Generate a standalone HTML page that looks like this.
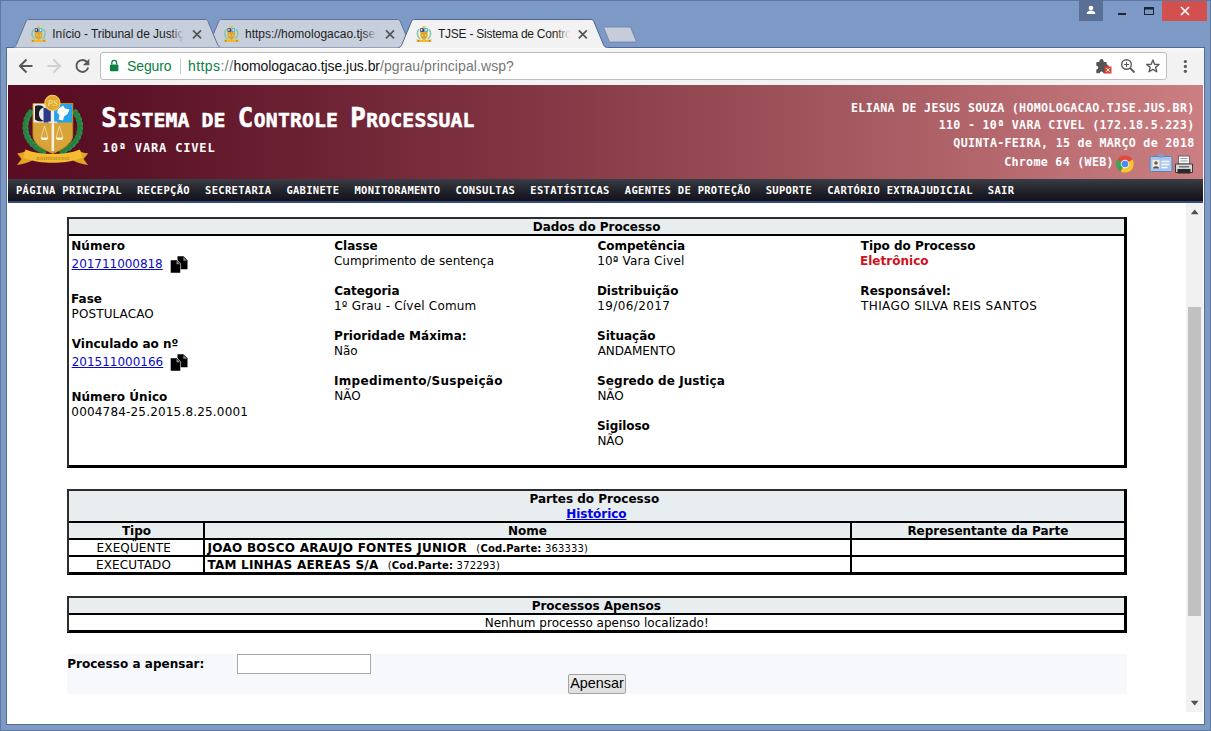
<!DOCTYPE html>
<html lang="pt-BR">
<head>
<meta charset="utf-8">
<title>TJSE - Sistema de Controle Processual</title>
<style>
html,body{margin:0;padding:0;}
body{width:1211px;height:731px;overflow:hidden;background:#7d99c5;position:relative;font-family:"Liberation Sans",sans-serif;}
.abs{position:absolute;}
#frame{position:absolute;left:0;top:0;width:1211px;height:731px;background:#7d99c5;}
/* ---------- chrome ui ---------- */
#toolbar{position:absolute;left:7px;top:48px;width:1197px;height:37px;background:linear-gradient(#fafafa 0,#f2f2f2 4px);}
#omni{position:absolute;left:100px;top:52px;width:1065px;height:26px;background:#fff;border:1px solid #bdbdbd;border-radius:3px;}
.tabtxt{position:absolute;top:26px;height:17px;font-size:12px;line-height:17px;color:#1e1e1e;white-space:nowrap;overflow:hidden;}
.url{position:absolute;top:55px;font-size:14px;line-height:22px;white-space:nowrap;}
/* ---------- page ---------- */
#page{position:absolute;left:8px;top:85px;width:1195px;height:639px;background:#fff;overflow:hidden;}
#hdr{position:absolute;left:0;top:0;width:1195px;height:94px;background:linear-gradient(90deg,#5a0c22 0%,#590f24 7%,#6b2032 24%,#7f3341 41%,#9e525a 66%,#cb7f82 100%);}
#menu{position:absolute;left:0;top:94px;width:1195px;height:22px;background:linear-gradient(180deg,#3b3d46 0%,#25262e 45%,#11121b 100%);border-bottom:2px solid #36497c;}
.mono{font-family:"DejaVu Sans Mono","Liberation Mono",monospace;font-weight:bold;color:#fff;white-space:nowrap;position:absolute;}
.v{font-family:"DejaVu Sans","Liberation Sans",sans-serif;font-size:12px;line-height:15px;color:#000;white-space:nowrap;position:absolute;}
.b{font-weight:bold;}
a{color:#0000ee;}

.tb{font-size:25.8px;letter-spacing:0.57px;-webkit-text-stroke:0.55px #fff;}
.ts{font-size:19.75px;letter-spacing:0.15px;-webkit-text-stroke:0.5px #fff;}
.rt{right:8.5px;font-size:11.67px;letter-spacing:0.29px;line-height:16px;text-align:right;}
#mn span{display:inline-block;margin-right:14.13px;}

.red{color:#d01018;}
.sm{font-size:10px;}
.v a{color:#0a0ac4;text-decoration:underline;}
.v.b a{color:#0000e6;}
</style>
</head>
<body>
<div id="frame"></div>
<div class="abs" style="left:0;top:0;width:1209px;height:729px;border:1px solid #5f789f;"></div>
<div class="abs" style="left:6px;top:47px;width:1197px;height:677px;border:1px solid #566c94;border-top:none;"></div>

<svg class="abs" style="left:0;top:0" width="1211" height="52" viewBox="0 0 1211 52">
<rect x="6" y="47" width="1199" height="1" fill="#4d6693"/>
<path d="M205.0,47.5 C207.0,47.5 208.3,46.5 209.1,44.5 L218.6,21.7 C219.1,20.4 219.9,19.5 221.3,19.5 L397.7,19.5 C399.1,19.5 399.9,20.4 400.4,21.7 L409.9,44.5 C410.7,46.5 412.0,47.5 414.0,47.5" fill="#c7cedc" stroke="#60739a" stroke-width="1"/>
<path d="M12.3,47.5 C14.3,47.5 15.600000000000001,46.5 16.400000000000002,44.5 L25.900000000000002,21.7 C26.400000000000002,20.4 27.2,19.5 28.6,19.5 L205.39999999999998,19.5 C206.79999999999998,19.5 207.6,20.4 208.1,21.7 L217.6,44.5 C218.39999999999998,46.5 219.7,47.5 221.7,47.5" fill="#c7cedc" stroke="#60739a" stroke-width="1"/>
<rect x="17" y="47" width="384" height="1" fill="#98a2b8"/>
<path d="M604.600 27L629.500 27Q630.400 27 630.800 27.900L636.300 41Q636.700 42 635.600 42L610.500 42Q609.600 42 609.200 41.100L603.800 28Q603.500 27 604.600 27z" fill="#c6ccda" stroke="#6a80a8" stroke-width="0.800"/>
<rect x="7" y="48" width="1197" height="4" fill="#f6f6f6"/>
<path d="M397.8,47.5 C399.8,47.5 401.1,46.5 401.90000000000003,44.5 L411.40000000000003,21.7 C411.90000000000003,20.4 412.7,19.5 414.1,19.5 L591.2,19.5 C592.6,19.5 593.4,20.4 593.9,21.7 L603.4,44.5 C604.2,46.5 605.5,47.5 607.5,47.5 L608,48.500 L397.300,48.500z" fill="#f2f2f2"/>
<path d="M397.8,47.5 C399.8,47.5 401.1,46.5 401.90000000000003,44.5 L411.40000000000003,21.7 C411.90000000000003,20.4 412.7,19.5 414.1,19.5 L591.2,19.5 C592.6,19.5 593.4,20.4 593.9,21.7 L603.4,44.5 C604.2,46.5 605.5,47.5 607.5,47.5" fill="none" stroke="#4f6590" stroke-width="1"/>
<g transform="translate(30.5,26)"><path d="M3 3.200C0.600 6 0.800 10.500 4.200 13.200M13 3.200C15.400 6 15.200 10.500 11.800 13.200" fill="none" stroke="#86c9a4" stroke-width="1.700"/><path d="M4.300 2.200h7.400v7.300c0 2.300-1.800 3.600-3.700 4.700-1.900-1.100-3.700-2.400-3.700-4.700z" fill="#dfa62f"/><path d="M4.300 2.200h3.700v3.600H4.300z" fill="#3a3f86"/><path d="M5 3h1.300v1.800H5z" fill="#eef0f8"/><path d="M8 2.200h3.700v3.600H8z" fill="#3fb4e6"/><path d="M9 3.500l1.600-.8.400 1.500-1.200 1z" fill="#d8f2fb"/><circle cx="8" cy="1.300" r="1.400" fill="#e6be3a"/><circle cx="6.300" cy="9.300" r=".7" fill="#f6dc7a"/><circle cx="9.700" cy="9.300" r=".7" fill="#f6dc7a"/><path d="M0 13.300l3.200.5h9.600l3.200-.5-1.200 1.400 1.200 1.300H0l1.200-1.300z" fill="#efbb2c"/><path d="M1.800 14.200h1.200v1.400H1.800zM13 14.200h1.200v1.400H13z" fill="#8a6a2a"/></g><g transform="translate(223.3,26)"><path d="M3 3.200C0.600 6 0.800 10.500 4.200 13.200M13 3.200C15.400 6 15.200 10.500 11.800 13.200" fill="none" stroke="#86c9a4" stroke-width="1.700"/><path d="M4.300 2.200h7.400v7.300c0 2.300-1.800 3.600-3.700 4.700-1.900-1.100-3.700-2.400-3.700-4.700z" fill="#dfa62f"/><path d="M4.300 2.200h3.700v3.600H4.300z" fill="#3a3f86"/><path d="M5 3h1.300v1.800H5z" fill="#eef0f8"/><path d="M8 2.200h3.700v3.600H8z" fill="#3fb4e6"/><path d="M9 3.500l1.600-.8.400 1.500-1.200 1z" fill="#d8f2fb"/><circle cx="8" cy="1.300" r="1.400" fill="#e6be3a"/><circle cx="6.300" cy="9.300" r=".7" fill="#f6dc7a"/><circle cx="9.700" cy="9.300" r=".7" fill="#f6dc7a"/><path d="M0 13.300l3.200.5h9.600l3.200-.5-1.200 1.400 1.200 1.300H0l1.200-1.300z" fill="#efbb2c"/><path d="M1.800 14.200h1.200v1.400H1.800zM13 14.200h1.200v1.400H13z" fill="#8a6a2a"/></g><g transform="translate(416,26)"><path d="M3 3.200C0.600 6 0.800 10.500 4.200 13.200M13 3.200C15.400 6 15.200 10.500 11.800 13.200" fill="none" stroke="#86c9a4" stroke-width="1.700"/><path d="M4.300 2.200h7.400v7.300c0 2.300-1.800 3.600-3.700 4.700-1.900-1.100-3.700-2.400-3.700-4.700z" fill="#dfa62f"/><path d="M4.300 2.200h3.700v3.600H4.300z" fill="#3a3f86"/><path d="M5 3h1.300v1.800H5z" fill="#eef0f8"/><path d="M8 2.200h3.700v3.600H8z" fill="#3fb4e6"/><path d="M9 3.500l1.600-.8.400 1.500-1.200 1z" fill="#d8f2fb"/><circle cx="8" cy="1.300" r="1.400" fill="#e6be3a"/><circle cx="6.300" cy="9.300" r=".7" fill="#f6dc7a"/><circle cx="9.700" cy="9.300" r=".7" fill="#f6dc7a"/><path d="M0 13.300l3.200.5h9.600l3.200-.5-1.200 1.400 1.200 1.300H0l1.200-1.300z" fill="#efbb2c"/><path d="M1.800 14.200h1.200v1.400H1.800zM13 14.200h1.200v1.400H13z" fill="#8a6a2a"/></g>
<g stroke="#555" stroke-width="1.700" fill="none"><path d="M193 30.300l8 8M201 30.300l-8 8"/><path d="M386 30.300l8 8M394 30.300l-8 8"/><path d="M578.800 30.300l8 8M586.800 30.300l-8 8"/></g>
<rect x="1079" y="0" width="24" height="21" fill="#5a6f96"/>
<circle cx="1091" cy="8" r="2.300" fill="#fff"/><path d="M1086.800 14v-.8c0-1.700 2.500-2.600 4.200-2.600s4.200.9 4.200 2.600v.8z" fill="#fff"/>
<rect x="1118" y="13" width="8" height="2" fill="#1c2438"/>
<rect x="1144.500" y="7.500" width="9" height="7" fill="none" stroke="#1c2438" stroke-width="1"/><rect x="1144" y="7" width="10" height="2.500" fill="#1c2438"/>
<rect x="1162" y="1" width="45" height="20" fill="#d4504f"/>
<path d="M1181 7l8 8M1189 7l-8 8" stroke="#fff" stroke-width="1.700"/>
</svg>
<div class="tabtxt" id="tt1" style="left:52.3px;width:132px;letter-spacing:-0.06px;">Início - Tribunal de Justiça</div>
<div class="tabtxt" id="tt2" style="left:245px;width:132px;">https://homologacao.tjse.jus.br</div>
<div class="tabtxt" id="tt3" style="left:438px;width:132px;letter-spacing:-0.25px;">TJSE - Sistema de Controle Processual</div>

<div class="abs" style="left:170px;top:24px;width:15px;height:20px;background:linear-gradient(90deg,rgba(198,206,221,0),rgba(198,206,221,1) 92%);"></div>
<div class="abs" style="left:363px;top:24px;width:15px;height:20px;background:linear-gradient(90deg,rgba(198,206,221,0),rgba(198,206,221,1) 92%);"></div>
<div class="abs" style="left:556px;top:24px;width:15px;height:20px;background:linear-gradient(90deg,rgba(242,242,242,0),rgba(242,242,242,1) 92%);"></div>
<!--TABS-->
<div id="toolbar"></div>
<div id="omni"></div>

<svg class="abs" style="left:0;top:48px" width="1211" height="37" viewBox="0 48 1211 37">
<g stroke="#5a5a5a" stroke-width="2" fill="none"><path d="M32.500 66H20.500M26.500 59.500L20 66l6.500 6.500"/></g>
<g stroke="#cfcfcf" stroke-width="2" fill="none"><path d="M47.500 66H59.500M53.500 59.500L60 66l-6.500 6.500"/></g>
<g stroke="#5a5a5a" stroke-width="2" fill="none"><path d="M87 62a6 6 0 1 0 1.200 5.500"/></g><path d="M89.300 58.800v6.400h-6.400z" fill="#5a5a5a"/>
<rect x="110" y="64.500" width="8.400" height="6.700" rx="1" fill="#0b8043"/><path d="M111.800 64.500v-1.700a2.400 2.400 0 0 1 4.800 0v1.700" fill="none" stroke="#0b8043" stroke-width="1.300"/>
<rect x="180" y="58.500" width="1" height="15" fill="#c9c9c9"/>
<g fill="#5a5a5a"><circle cx="1185.400" cy="61.500" r="1.600"/><circle cx="1185.400" cy="66.400" r="1.600"/><circle cx="1185.400" cy="71.300" r="1.600"/></g>
<path d="M1152.90 60.00L1154.58 64.19L1159.08 64.49L1155.61 67.38L1156.72 71.76L1152.90 69.35L1149.08 71.76L1150.19 67.38L1146.72 64.49L1151.22 64.19z" fill="none" stroke="#5a5a5a" stroke-width="1.400" stroke-linejoin="round"/>
<g fill="none" stroke="#5a5a5a" stroke-width="1.400"><circle cx="1126.500" cy="64.500" r="4.800"/><path d="M1130 68l4.500 4.500" stroke-width="1.800"/><path d="M1124 64.500h5M1126.500 62v5" stroke-width="1"/></g>
<g fill="#555"><rect x="1096.300" y="62" width="10.400" height="11.200" rx=".8"/><circle cx="1101.500" cy="61.200" r="2.100"/><circle cx="1106.700" cy="66.500" r="2"/></g><g fill="#fff"><circle cx="1096.300" cy="67.600" r="1.900"/><circle cx="1101.500" cy="73.400" r="1.900"/></g>
<rect x="1104.500" y="66.500" width="7" height="7" fill="#db4437"/><path d="M1106.300 68.300l3.400 3.400M1109.700 68.300l-3.400 3.400" stroke="#fff" stroke-width="1"/>
</svg>
<div class="url" id="seg" style="left:127px;color:#0b8043;letter-spacing:-0.1px;">Seguro</div>
<div class="url" id="urlt" style="left:188px;"><span style="color:#0b8043;letter-spacing:0.43px">https</span><span style="color:#777;letter-spacing:0.43px">://</span><span style="color:#111;letter-spacing:-0.06px">homologacao.tjse.jus.br</span><span style="color:#777;letter-spacing:0.08px">/pgrau/principal.wsp?</span></div>
<!--TOOLBARITEMS-->
<div class="abs" style="left:7px;top:85px;width:1197px;height:639px;background:#fff;"></div>
<div id="page">
  <div id="hdr"></div>
  <div id="menu"></div>

<div class="mono" id="title" style="left:93.2px;top:18px;line-height:30px;"><span class="tb">S</span><span class="ts">ISTEMA DE </span><span class="tb">C</span><span class="ts">ONTROLE </span><span class="tb">P</span><span class="ts">ROCESSUAL</span></div>
<div class="mono" id="sub" style="left:94.6px;top:55px;font-size:12.1px;letter-spacing:0.78px;line-height:16px;">10ª VARA CIVEL</div>
<div class="mono rt" style="top:15px;">ELIANA DE JESUS SOUZA (HOMOLOGACAO.TJSE.JUS.BR)</div>
<div class="mono rt" style="top:32px;">110 - 10ª VARA CIVEL (172.18.5.223)</div>
<div class="mono rt" style="top:50px;">QUINTA-FEIRA, 15 de MARÇO de 2018</div>
<div class="mono rt" style="top:69px;right:89.2px;">Chrome 64 (WEB)</div>
<div class="mono" id="mn" style="left:7.9px;top:98.8px;font-size:9.8px;letter-spacing:0.287px;line-height:14px;transform:scaleX(1.07);transform-origin:0 0;"><span>PÁGINA PRINCIPAL</span><span>RECEPÇÃO</span><span>SECRETARIA</span><span>GABINETE</span><span>MONITORAMENTO</span><span>CONSULTAS</span><span>ESTATÍSTICAS</span><span>AGENTES DE PROTEÇÃO</span><span>SUPORTE</span><span>CARTÓRIO EXTRAJUDICIAL</span><span>SAIR</span></div>

<svg class="abs" id="logo" style="left:2px;top:3px" width="90" height="84" viewBox="0 0 90 84">
<ellipse cx="19.7" cy="25.5" rx="4.3" ry="2.3" transform="rotate(-28 19.7 25.5)" fill="#2f9350"/><ellipse cx="19.7" cy="25.5" rx="4.300" ry="2.200" transform="rotate(-84 19.7 25.5)" fill="#27803f"/><ellipse cx="17.5" cy="29.4" rx="4.3" ry="2.3" transform="rotate(-38 17.5 29.4)" fill="#2f9350"/><ellipse cx="17.5" cy="29.4" rx="4.300" ry="2.200" transform="rotate(-94 17.5 29.4)" fill="#27803f"/><ellipse cx="16.1" cy="33.7" rx="4.3" ry="2.3" transform="rotate(-49 16.1 33.7)" fill="#2f9350"/><ellipse cx="16.1" cy="33.7" rx="4.300" ry="2.200" transform="rotate(-105 16.1 33.7)" fill="#27803f"/><ellipse cx="15.5" cy="38.1" rx="4.3" ry="2.3" transform="rotate(-60 15.5 38.1)" fill="#2f9350"/><ellipse cx="15.5" cy="38.1" rx="4.300" ry="2.200" transform="rotate(-116 15.5 38.1)" fill="#27803f"/><ellipse cx="15.8" cy="42.5" rx="4.3" ry="2.3" transform="rotate(-71 15.8 42.5)" fill="#2f9350"/><ellipse cx="15.8" cy="42.5" rx="4.300" ry="2.200" transform="rotate(-127 15.8 42.5)" fill="#27803f"/><ellipse cx="16.8" cy="46.9" rx="4.3" ry="2.3" transform="rotate(-81 16.8 46.9)" fill="#2f9350"/><ellipse cx="16.8" cy="46.9" rx="4.300" ry="2.200" transform="rotate(-137 16.8 46.9)" fill="#27803f"/><ellipse cx="18.7" cy="51.0" rx="4.3" ry="2.3" transform="rotate(-92 18.7 51.0)" fill="#2f9350"/><ellipse cx="18.7" cy="51.0" rx="4.300" ry="2.200" transform="rotate(-148 18.7 51.0)" fill="#27803f"/><ellipse cx="21.3" cy="54.7" rx="4.3" ry="2.3" transform="rotate(-102 21.3 54.7)" fill="#2f9350"/><ellipse cx="21.3" cy="54.7" rx="4.300" ry="2.200" transform="rotate(-158 21.3 54.7)" fill="#27803f"/><ellipse cx="24.6" cy="58.0" rx="4.3" ry="2.3" transform="rotate(-112 24.6 58.0)" fill="#2f9350"/><ellipse cx="24.6" cy="58.0" rx="4.300" ry="2.200" transform="rotate(-168 24.6 58.0)" fill="#27803f"/><ellipse cx="28.4" cy="60.6" rx="4.3" ry="2.3" transform="rotate(-122 28.4 60.6)" fill="#2f9350"/><ellipse cx="28.4" cy="60.6" rx="4.300" ry="2.200" transform="rotate(-178 28.4 60.6)" fill="#27803f"/><ellipse cx="32.7" cy="62.6" rx="4.3" ry="2.3" transform="rotate(-131 32.7 62.6)" fill="#2f9350"/><ellipse cx="32.7" cy="62.6" rx="4.300" ry="2.200" transform="rotate(-187 32.7 62.6)" fill="#27803f"/><ellipse cx="65.9" cy="25.5" rx="4.300" ry="2.300" transform="rotate(84 65.9 25.5)" fill="#2f9350"/><ellipse cx="65.9" cy="25.5" rx="4.300" ry="2.200" transform="rotate(28 65.9 25.5)" fill="#27803f"/><ellipse cx="68.1" cy="29.4" rx="4.300" ry="2.300" transform="rotate(94 68.1 29.4)" fill="#2f9350"/><ellipse cx="68.1" cy="29.4" rx="4.300" ry="2.200" transform="rotate(38 68.1 29.4)" fill="#27803f"/><ellipse cx="69.5" cy="33.7" rx="4.300" ry="2.300" transform="rotate(105 69.5 33.7)" fill="#2f9350"/><ellipse cx="69.5" cy="33.7" rx="4.300" ry="2.200" transform="rotate(49 69.5 33.7)" fill="#27803f"/><ellipse cx="70.1" cy="38.1" rx="4.300" ry="2.300" transform="rotate(116 70.1 38.1)" fill="#2f9350"/><ellipse cx="70.1" cy="38.1" rx="4.300" ry="2.200" transform="rotate(60 70.1 38.1)" fill="#27803f"/><ellipse cx="69.8" cy="42.5" rx="4.300" ry="2.300" transform="rotate(127 69.8 42.5)" fill="#2f9350"/><ellipse cx="69.8" cy="42.5" rx="4.300" ry="2.200" transform="rotate(71 69.8 42.5)" fill="#27803f"/><ellipse cx="68.8" cy="46.9" rx="4.300" ry="2.300" transform="rotate(137 68.8 46.9)" fill="#2f9350"/><ellipse cx="68.8" cy="46.9" rx="4.300" ry="2.200" transform="rotate(81 68.8 46.9)" fill="#27803f"/><ellipse cx="66.9" cy="51.0" rx="4.300" ry="2.300" transform="rotate(148 66.9 51.0)" fill="#2f9350"/><ellipse cx="66.9" cy="51.0" rx="4.300" ry="2.200" transform="rotate(92 66.9 51.0)" fill="#27803f"/><ellipse cx="64.3" cy="54.7" rx="4.300" ry="2.300" transform="rotate(158 64.3 54.7)" fill="#2f9350"/><ellipse cx="64.3" cy="54.7" rx="4.300" ry="2.200" transform="rotate(102 64.3 54.7)" fill="#27803f"/><ellipse cx="61.0" cy="58.0" rx="4.300" ry="2.300" transform="rotate(168 61.0 58.0)" fill="#2f9350"/><ellipse cx="61.0" cy="58.0" rx="4.300" ry="2.200" transform="rotate(112 61.0 58.0)" fill="#27803f"/><ellipse cx="57.2" cy="60.6" rx="4.300" ry="2.300" transform="rotate(178 57.2 60.6)" fill="#2f9350"/><ellipse cx="57.2" cy="60.6" rx="4.300" ry="2.200" transform="rotate(122 57.2 60.6)" fill="#27803f"/><ellipse cx="52.9" cy="62.6" rx="4.300" ry="2.300" transform="rotate(187 52.9 62.6)" fill="#2f9350"/><ellipse cx="52.9" cy="62.6" rx="4.300" ry="2.200" transform="rotate(131 52.9 62.6)" fill="#27803f"/>
<path d="M23 15.500H62.700V47C62.700 56 52 61.500 42.800 65.500C33.500 61.500 23 56 23 47z" fill="#d9a437"/>
<path d="M23 15.500H42.800V34.500H23z" fill="#e9ecf2"/>
<path d="M42.800 15.500H62.700V34.500H42.800z" fill="#25a3e6"/>
<path d="M25 18c3-1.500 7-1 9 1.500-3 .5-5 3-5 6.500s2 6 5 7c-3 1-7 .5-9-1.500z" fill="#1c1c22"/>
<path d="M33.500 20h7.300v14.500h-7.300z" fill="#2c3a8c"/>
<path d="M48 21l5-3.500 2 3 4.500 1-2 4.500-3.500 2.500-1 4-4.500-1 1-4.500-2.500-2.500z" fill="#fdfdfd"/>
<path d="M23 15.500H62.700V47C62.700 56 52 61.500 42.800 65.500C33.500 61.500 23 56 23 47z" fill="none" stroke="#c48a22" stroke-width="1"/>
<rect x="41.600" y="22" width="2.500" height="41" fill="#f6f2ea"/>
<rect x="38.500" y="33.500" width="8.700" height="1.500" fill="#e8e2d4"/>
<path d="M34.500 38l-3.300 11.500M34.500 38l3.300 11.500M49.500 38l-3.300 11.500M49.500 38l3.300 11.500" stroke="#f2e6c4" stroke-width=".7" fill="none"/>
<path d="M30.800 49.500h7.400a3.700 2.600 0 0 1-7.400 0zM45.800 49.500h7.400a3.700 2.600 0 0 1-7.400 0z" fill="#fbf6e8"/>
<circle cx="42.400" cy="15" r="7.600" fill="#e3a92f" stroke="#f4c957" stroke-width="1.200"/>
<text x="42.400" y="18.200" font-family="Liberation Serif,serif" font-size="9" fill="#f8e3a0" text-anchor="middle" font-style="italic">PS</text>
<path d="M7.200 65.500C11 65 14 64 17 62.500L22 72.500C18 74.500 13 76.500 7 77L11.500 71z" fill="#e2a422"/>
<path d="M78.200 65.500C74 65 71 64 68 62.500L63 72.500C67 74.500 72 76.500 78 77L73.500 71z" fill="#e2a422"/>
<path d="M15.500 61.500C24 65 33 66 42.700 66C52 66 61.500 65 70 61.500L72.500 69.500C63 73.500 52 74.800 42.700 74.800C33 74.800 22.500 73.500 13 69.500z" fill="#f4bb33"/>
<text x="42.700" y="72.300" font-family="Liberation Serif,serif" font-size="4.600" font-weight="bold" fill="#b9861e" text-anchor="middle" textLength="34">JUSTITIA ET PAX</text>
</svg>

<svg class="abs" style="left:1107px;top:68px" width="80" height="22" viewBox="1115 153 80 22">
<circle cx="1125" cy="164" r="8.800" fill="#e5473a"/>
<path d="M1125 164L1117.400 159.600A8.800 8.800 0 0 0 1120.600 171.600z" fill="#3aa757"/>
<path d="M1125 164L1120.600 171.600A8.800 8.800 0 0 0 1133.800 164z" fill="#f7c52d"/>
<path d="M1125 164L1133.800 164A8.800 8.800 0 0 0 1132.600 159.600z" fill="#f7c52d"/>
<circle cx="1125" cy="164" r="4.200" fill="#f4f4f4"/><circle cx="1125" cy="164" r="3.300" fill="#4a8af4"/>
<rect x="1150" y="156.500" width="22" height="15" rx="1.500" fill="#a9c7ea" stroke="#5b82b5" stroke-width="1"/>
<rect x="1158.500" y="153.800" width="5" height="4" rx="1" fill="#7da1cf"/>
<rect x="1152.500" y="160" width="7" height="8.500" fill="#f1ede6"/><circle cx="1156" cy="163" r="1.800" fill="#7a5a48"/><path d="M1153 168.500c0-3 6-3 6 0z" fill="#5a4a5a"/>
<path d="M1161.500 161.500h8M1161.500 164.500h8M1161.500 167.500h6" stroke="#f7f9fd" stroke-width="1.300"/>
<rect x="1178.500" y="156" width="11" height="8" fill="#f5f5f5" stroke="#555" stroke-width=".8"/>
<path d="M1180.500 158.500h7M1180.500 161h7" stroke="#888" stroke-width=".8"/>
<path d="M1175.500 164h17v8.500h-17z" fill="#d6d6d6" stroke="#3a3a3a" stroke-width="1"/>
<rect x="1177.500" y="169" width="13" height="4.500" fill="#2a2a2a"/>
<rect x="1179" y="166" width="10" height="1.500" fill="#777"/>
</svg>
<!--HEADER-->
<!--CONTENT-->
<div class="abs" style="left:59px;top:132px;width:1060px;height:251px;background:#000"></div>
<div class="abs" style="left:59px;top:132px;width:1057px;height:2px;background:#2c2e2e"></div>
<div class="abs" style="left:59px;top:132px;width:2px;height:250px;background:#2c2e2e"></div>
<div class="abs" style="left:61px;top:134px;width:1055px;height:246px;background:#fff"></div>
<div class="abs" style="left:61px;top:134px;width:1055px;height:15px;background:#e8edef"></div>
<div class="abs" style="left:61px;top:149px;width:1055px;height:2px;background:#000"></div>
<div class="abs" style="left:59px;top:404px;width:1060px;height:86px;background:#000"></div>
<div class="abs" style="left:59px;top:404px;width:1057px;height:2px;background:#2c2e2e"></div>
<div class="abs" style="left:59px;top:404px;width:2px;height:85px;background:#2c2e2e"></div>
<div class="abs" style="left:61px;top:406px;width:1055px;height:81px;background:#fff"></div>
<div class="abs" style="left:61px;top:406px;width:1055px;height:30px;background:#e8edef"></div>
<div class="abs" style="left:61px;top:438px;width:1055px;height:15px;background:#e8edef"></div>
<div class="abs" style="left:61px;top:436px;width:1055px;height:2px;background:#000"></div>
<div class="abs" style="left:61px;top:453px;width:1055px;height:2px;background:#000"></div>
<div class="abs" style="left:61px;top:470px;width:1055px;height:2px;background:#000"></div>
<div class="abs" style="left:195px;top:438px;width:2px;height:49px;background:#000"></div>
<div class="abs" style="left:842px;top:438px;width:2px;height:49px;background:#000"></div>
<div class="abs" style="left:59px;top:511px;width:1060px;height:37px;background:#000"></div>
<div class="abs" style="left:59px;top:511px;width:1057px;height:2px;background:#2c2e2e"></div>
<div class="abs" style="left:59px;top:511px;width:2px;height:36px;background:#2c2e2e"></div>
<div class="abs" style="left:61px;top:513px;width:1055px;height:32px;background:#fff"></div>
<div class="abs" style="left:61px;top:513px;width:1055px;height:15px;background:#e8edef"></div>
<div class="abs" style="left:61px;top:528px;width:1055px;height:2px;background:#000"></div>
<div class="abs" style="left:59px;top:569px;width:1060px;height:40px;background:#f7f8fc"></div>
<div class="abs" style="left:229px;top:569px;width:132px;height:18px;background:#fff;border:1px solid #a9a9a9;"></div>
<div class="abs" id="btn" style="left:560px;top:589px;width:56px;height:18px;border:1px solid #a3a3a3;border-radius:2px;background:linear-gradient(#eeeeee,#dedede);"></div>
<div class="abs" id="btxt" style="left:560px;top:588.4px;width:58px;height:20px;line-height:20px;text-align:center;font-size:14.4px;color:#000;font-family:'Liberation Sans',sans-serif;">Apensar</div>
<svg class="abs" style="left:162.0px;top:170.7px" width="18" height="18" viewBox="0 0 18 18"><path d="M7.500 0.300h6l4 4v9H7.500z" fill="#000"/><path d="M13.300 0.900v3.800h3.800z" fill="#8a8a8a"/><path d="M0.400 3.900h6.500l3.700 3.800v9.400H0.400z" fill="#000" stroke="#fff" stroke-width="0.600"/><path d="M6.500 4.600v3.700h3.700z" fill="#8a8a8a"/></svg>
<svg class="abs" style="left:162.0px;top:268.7px" width="18" height="18" viewBox="0 0 18 18"><path d="M7.500 0.300h6l4 4v9H7.500z" fill="#000"/><path d="M13.300 0.900v3.800h3.800z" fill="#8a8a8a"/><path d="M0.400 3.900h6.500l3.700 3.800v9.400H0.400z" fill="#000" stroke="#fff" stroke-width="0.600"/><path d="M6.500 4.600v3.700h3.700z" fill="#8a8a8a"/></svg>
<div class="v b" id="t1" style="left:524.76px;top:135.0px;letter-spacing:-0.019px">Dados do Processo</div>
<div class="v b" id="a1" style="left:63.17px;top:154.0px;letter-spacing:0.112px">Número</div>
<div class="v " id="a2" style="left:63.60px;top:172.0px;letter-spacing:-0.043px"><a>201711000818</a></div>
<div class="v b" id="a3" style="left:63.10px;top:207.0px;letter-spacing:0.000px">Fase</div>
<div class="v " id="a4" style="left:63.61px;top:222.0px;letter-spacing:0.100px">POSTULACAO</div>
<div class="v b" id="a5" style="left:63.72px;top:252.0px;letter-spacing:0.014px">Vinculado ao nº</div>
<div class="v " id="a6" style="left:63.66px;top:270.0px;letter-spacing:-0.003px"><a>201511000166</a></div>
<div class="v b" id="a7" style="left:63.40px;top:305.0px;letter-spacing:0.052px">Número Único</div>
<div class="v " id="a8" style="left:63.32px;top:320.0px;letter-spacing:0.180px">0004784-25.2015.8.25.0001</div>
<div class="v b" id="b1" style="left:326.23px;top:154.0px;letter-spacing:0.018px">Classe</div>
<div class="v " id="b2" style="left:325.94px;top:169.0px;letter-spacing:0.013px">Cumprimento de sentença</div>
<div class="v b" id="b3" style="left:326.18px;top:199.0px;letter-spacing:-0.049px">Categoria</div>
<div class="v " id="b4" style="left:325.98px;top:214.0px;letter-spacing:0.202px">1º Grau - Cível Comum</div>
<div class="v b" id="b5" style="left:326.08px;top:244.0px;letter-spacing:0.029px">Prioridade Máxima:</div>
<div class="v " id="b6" style="left:325.94px;top:259.0px;letter-spacing:0.000px">Não</div>
<div class="v b" id="b7" style="left:326.06px;top:289.0px;letter-spacing:0.290px">Impedimento/Suspeição</div>
<div class="v " id="b8" style="left:326.24px;top:304.0px;letter-spacing:0.000px">NÃO</div>
<div class="v b" id="c1" style="left:589.42px;top:154.0px;letter-spacing:-0.027px">Competência</div>
<div class="v " id="c2" style="left:589.25px;top:169.0px;letter-spacing:0.155px">10ª Vara Civel</div>
<div class="v b" id="c3" style="left:588.91px;top:199.0px;letter-spacing:-0.013px">Distribuição</div>
<div class="v " id="c4" style="left:589.34px;top:214.0px;letter-spacing:0.368px">19/06/2017</div>
<div class="v b" id="c5" style="left:589.08px;top:244.0px;letter-spacing:-0.021px">Situação</div>
<div class="v " id="c6" style="left:589.72px;top:259.0px;letter-spacing:-0.058px">ANDAMENTO</div>
<div class="v b" id="c7" style="left:589.05px;top:289.0px;letter-spacing:0.071px">Segredo de Justiça</div>
<div class="v " id="c8" style="left:589.40px;top:304.0px;letter-spacing:0.000px">NÃO</div>
<div class="v b" id="c9" style="left:589.06px;top:334.0px;letter-spacing:-0.067px">Sigiloso</div>
<div class="v " id="c10" style="left:589.40px;top:349.0px;letter-spacing:0.000px">NÃO</div>
<div class="v b" id="d1" style="left:852.83px;top:154.0px;letter-spacing:-0.033px">Tipo do Processo</div>
<div class="v b red" id="d2" style="left:851.99px;top:169.0px;letter-spacing:0.027px">Eletrônico</div>
<div class="v b" id="d3" style="left:852.36px;top:199.0px;letter-spacing:0.050px">Responsável:</div>
<div class="v " id="d4" style="left:853.02px;top:214.0px;letter-spacing:0.401px">THIAGO SILVA REIS SANTOS</div>
<div class="v b" id="p1" style="left:521.46px;top:407.0px;letter-spacing:0.016px">Partes do Processo</div>
<div class="v b" id="p2" style="left:558.27px;top:422.0px;letter-spacing:-0.053px"><a>Histórico</a></div>
<div class="v b" id="p3" style="left:113.90px;top:439.0px;letter-spacing:0.000px">Tipo</div>
<div class="v b" id="p4" style="left:500.06px;top:439.0px;letter-spacing:0.000px">Nome</div>
<div class="v b" id="p5" style="left:899.41px;top:439.0px;letter-spacing:-0.027px">Representante da Parte</div>
<div class="v " id="p6" style="left:88.55px;top:456.0px;letter-spacing:0.142px">EXEQÜENTE</div>
<div class="v " id="p7" style="left:88.02px;top:473.0px;letter-spacing:0.125px">EXECUTADO</div>
<div class="v b" id="p8" style="left:199.56px;top:456.0px;letter-spacing:0.271px">JOAO BOSCO ARAUJO FONTES JUNIOR</div>
<div class="v sm" id="p9" style="left:468.31px;top:456.0px;letter-spacing:0.169px">(<b>Cod.Parte:</b> 363333)</div>
<div class="v b" id="p10" style="left:199.46px;top:473.0px;letter-spacing:0.224px">TAM LINHAS AEREAS S/A</div>
<div class="v sm" id="p11" style="left:379.76px;top:473.0px;letter-spacing:0.190px">(<b>Cod.Parte:</b> 372293)</div>
<div class="v b" id="q1" style="left:523.66px;top:514.0px;letter-spacing:0.002px">Processos Apensos</div>
<div class="v " id="q2" style="left:476.66px;top:531.0px;letter-spacing:0.001px">Nenhum processo apenso localizado!</div>
<div class="v b" id="f1" style="left:59.17px;top:572.0px;letter-spacing:0.036px">Processo a apensar:</div>
<!--/CONTENT-->
<div class="abs" style="left:1178px;top:118px;width:17px;height:509px;background:#f1f1f1;"></div>
<div class="abs" style="left:1180px;top:222px;width:13px;height:309px;background:#c1c1c1;"></div>
<svg class="abs" style="left:1178px;top:118px" width="17" height="509" viewBox="0 0 17 509"><path d="M4.800 11.300L8.700 6.500L12.600 11.300z" fill="#505050"/><path d="M4.800 497.800L8.700 502.500L12.600 497.800z" fill="#505050"/></svg>

</div>
</body>
</html>
